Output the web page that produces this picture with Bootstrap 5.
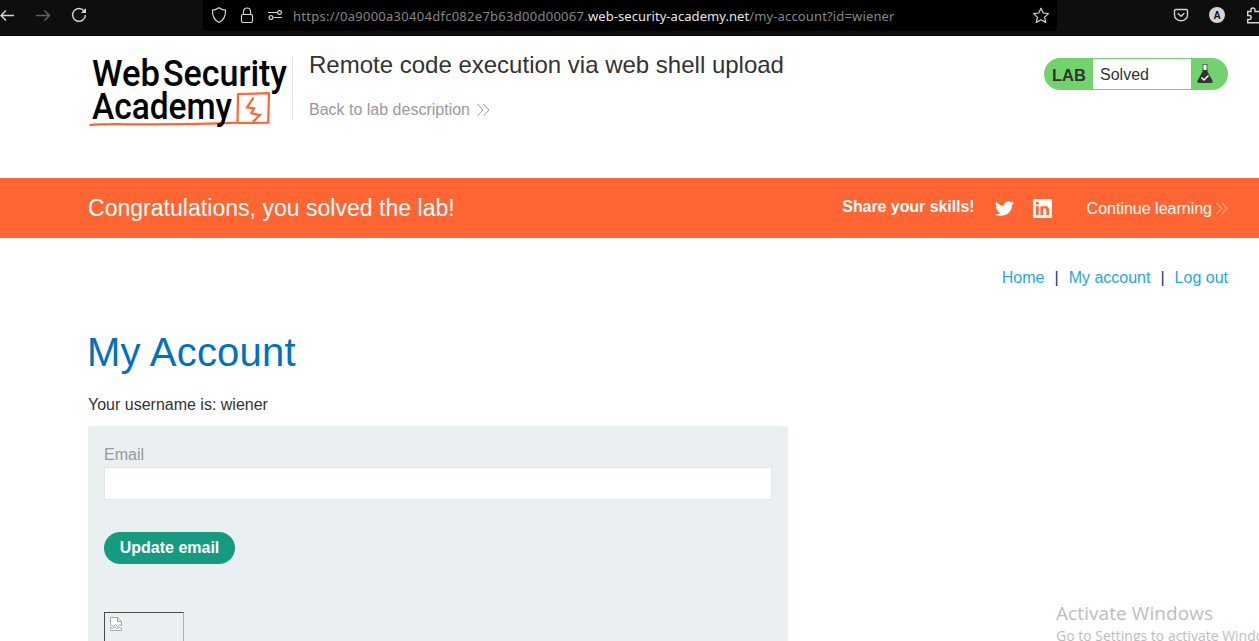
<!DOCTYPE html>
<html lang="en">
<head>
<meta charset="utf-8">
<meta name="viewport" content="width=device-width, initial-scale=1">
<title>Remote code execution via web shell upload</title>
<link href="https://cdn.jsdelivr.net/npm/bootstrap@5.3.0/dist/css/bootstrap.min.css" rel="stylesheet">
<style>
body{font-family:"Liberation Sans",Arial,sans-serif;font-size:16px;line-height:20px;color:#333332;height:641px;overflow:hidden;background:#fff}
a{text-decoration:none}
svg{display:block;flex:none}
.toolbar{height:36px;background:#0e0e0e;border-bottom:1px solid #050505;color:#d4d4d4}
.toolbar>svg{margin-top:7px}
.urlbar{margin-left:116px;width:854px;height:31px;background:#000;border-radius:0 0 4px 4px;padding:0 7px 0 8px}
.address{font-family:"Noto Sans","Open Sans",sans-serif;font-size:13px;color:#858585;white-space:nowrap;margin-left:10px;padding-top:1px;letter-spacing:.27px}
.address b{font-weight:400;color:#e6e6e6;letter-spacing:.06px}
.address .path{letter-spacing:.15px}
.profile{width:16px;height:16px;background:#d4d4d4;color:#111;font-size:10px;line-height:17px;margin-top:7px}
.inset{padding-left:88px;padding-right:31px}
.lab-header{height:142px}
.divider-line{width:1px;height:64px;background:#e4e4e4;margin:20px 16px 0 2px}
.lab-title{font-size:24px;line-height:28px;margin:15px 0 0;font-weight:400}
.back{color:#999;margin-top:21px}
.status{width:184px;height:32px;background:#72d36e;margin-top:22px}
.status strong{width:49px;padding-left:8px;font-size:16.500px;line-height:34px}
.status span{width:98px;height:30px;line-height:31px;padding-left:7px;margin-top:1px}
.banner{height:60px;background:#f63;color:#fff}
.banner h4{font-size:23px;line-height:60px;font-weight:400;letter-spacing:.03px}
.banner strong{letter-spacing:-.06px}
.menu{height:40px;margin-top:20px}
.menu a{color:#29a7df}
.menu span{color:#0b3c73;margin:0 10px}
.menu span:last-of-type{margin-right:10px}
h1.page-title{font-size:40px;line-height:48px;font-weight:400;color:#0071bc;margin:30px 0 19px -1px;letter-spacing:.2px}
.panel{width:700px;height:215px;overflow:hidden;background:#eaeff2;margin-top:11px;padding:19px 16px 0}
.panel label{color:#999;margin-bottom:2px}
.form-control{height:33px;border:1px solid #e4e6e5;border-radius:0;background:#fff}
.btn-update{width:131px;height:32px;padding:0;background:#169b80;color:#fff;font-weight:700;line-height:30px;margin-top:32px}
.avatar{width:80px;height:80px;border:1px solid #b2b2b2;border-top-color:#484a4a;border-left-color:#484a4a;margin-top:48px;padding:4px 0 0 5px}
.watermark{left:1056px;right:0;top:602px;height:39px;overflow:hidden;font-family:"Open Sans","Noto Sans",sans-serif;color:#bdbdbd;white-space:nowrap}
.watermark div:first-child{font-size:19px;line-height:22px;letter-spacing:.08px}
.watermark div:last-child{font-size:14px;line-height:22px;margin-top:1px}
</style>
</head>
<body class="position-relative">
<div class="toolbar d-flex">
  <svg width="16" height="16" viewBox="0 0 16 16" fill="none" stroke="currentColor" stroke-width="1.500"><path d="M14 8.500H1.500M6 3.500 1 8.500l5 5"/></svg>
  <svg style="margin-left:19px" width="16" height="16" viewBox="0 0 16 16" fill="none" stroke="#626262" stroke-width="1.500"><path d="M1 8.500h13M9.500 3.500l5 5-5 5"/></svg>
  <svg style="margin-left:20px" width="16" height="16" viewBox="0 0 16 16" fill="none" stroke="currentColor" stroke-width="1.500"><path d="M13.200 4.200A6.400 6.400 0 1 0 14.400 8"/><path d="M15 1v5h-5z" fill="currentColor" stroke="none"/></svg>
  <div class="urlbar d-flex">
    <svg style="margin-top:7px" width="16" height="17" viewBox="0 0 16 17" fill="none" stroke="currentColor" stroke-width="1.200"><path d="M8 .8c2 1.600 4.300 2.200 6.500 2.400.4 5.200-1.700 9.600-6.500 12.400C3.200 12.800 1.100 8.400 1.500 3.200 3.700 3 6 2.400 8 .8z"/></svg>
    <svg style="margin:7px 0 0 13px" width="14" height="17" viewBox="0 0 14 17" fill="none" stroke="currentColor" stroke-width="1.200"><rect x="1.500" y="7.500" width="11" height="8" rx="1.500"/><path d="M3.500 7V4.500a3.500 3.500 0 0 1 7 0V7"/></svg>
    <svg style="margin:8px 0 0 14px" width="15" height="14" viewBox="0 0 15 14" fill="none" stroke="currentColor" stroke-width="1.200"><circle cx="11.500" cy="4.500" r="1.900"/><circle cx="3" cy="9.500" r="1.900"/><path d="M0 4.500h9M5.500 9.500H14"/></svg>
    <div class="address d-flex align-items-center">https://0a9000a30404dfc082e7b63d00d00067.<b>web-security-academy.net</b><span class="path">/my-account?id=wiener</span></div>
    <svg class="ms-auto" style="margin-top:7px" width="18" height="17" viewBox="0 0 18 17" fill="none" stroke="currentColor" stroke-width="1.200" stroke-linejoin="round"><path d="m9 1.200 2.200 4.800 5.300.6-3.900 3.500 1.100 5.300L9 12.800l-4.700 2.600 1.100-5.300L1.500 6.600 6.800 6z"/></svg>
  </div>
  <svg style="margin-left:116px" width="16" height="16" viewBox="0 0 16 16" fill="none" stroke="currentColor" stroke-width="1.400"><path d="M2.800 2.500h10.400q1.300 0 1.300 1.300V8a6.500 5.800 0 0 1-13 0V3.800q0-1.300 1.300-1.300zM4.700 6.200 8 9.300l3.300-3.100"/></svg>
  <div class="profile rounded-circle text-center fw-bold" style="margin-left:20px">A</div>
  <svg style="margin-left:21px" width="13" height="18" viewBox="0 0 13 18" fill="none" stroke="currentColor" stroke-width="1.400"><path d="M13 4.500H9V3a2 2 0 0 0-4 0v1.500H1.700v4h1.500a2 2 0 0 1 0 4H1.700v3.300H13"/></svg>
</div>

<header class="lab-header inset d-flex">
  <svg width="202" height="94" viewBox="88 36 202 94" fill="#000">
    <g fill="none" stroke="#f63" stroke-linejoin="round"><path d="M89.500 125.200q10-1.300 40-.9 60 .6 108-1.600l.5-28.700 31-.8-.8 29.500-30.500.3" stroke-width="2.200"/><path d="m253.500 97.500-6.500 9.800 7 1-2.600 5 8.400 1.600-7 7.200" stroke-width="2.200" stroke-linejoin="miter"/></g>
    <g font-family="Roboto,Open Sans,sans-serif" font-weight="500" font-size="37.500"><text x="92" y="86.300" textLength="68" lengthAdjust="spacingAndGlyphs">Web</text><text x="163" y="86.300" textLength="124" lengthAdjust="spacingAndGlyphs">Security</text><text x="92" y="118.700" textLength="140" lengthAdjust="spacingAndGlyphs">Academy</text></g>
  </svg>
  <div class="divider-line"></div>
  <div>
    <h2 class="lab-title">Remote code execution via web shell upload</h2>
    <a href="#" class="back d-flex align-items-center">Back to lab description<svg style="margin-left:7px" width="13" height="14" viewBox="0 0 13 14" fill="none" stroke="currentColor" stroke-width="1"><path d="m.5 1 5.500 6-5.500 6M6.500 1 12 7l-5.500 6"/></svg></a>
  </div>
  <div class="status d-flex rounded-pill ms-auto"><strong>LAB</strong><span class="bg-white">Solved</span>
    <svg style="margin:6px 0 0 5px" width="18" height="20" viewBox="0 0 18 20"><path d="M6.500 5h5v2.500l5 9.300q.8 2.200-1.500 2.200H3q-2.300 0-1.500-2.200l5-9.300z" fill="#333332"/><path d="M7.200 1h3.600v5H7.200z" fill="#fff"/><path d="M6 .6h6M7 1v5M11 1v5" fill="none" stroke="#555" stroke-width=".8"/><path d="m5.500 13.500 2.500 2.500 4.500-4.500" fill="none" stroke="#fff" stroke-width="1.500"/></svg>
  </div>
</header>

<section class="banner inset d-flex">
  <h4 class="mb-0">Congratulations, you solved the lab!</h4>
  <strong class="ms-auto" style="line-height:57px">Share your skills!</strong>
  <svg style="margin:21px 0 0 20px" width="19" height="18" viewBox="0 0 16 16" preserveAspectRatio="none" fill="#fff"><path d="M5.026 15c6.038 0 9.341-5.003 9.341-9.334q.002-.211-.006-.422A6.700 6.700 0 0 0 16 3.542a6.700 6.700 0 0 1-1.889.518 3.300 3.300 0 0 0 1.447-1.817 6.500 6.500 0 0 1-2.087.793A3.286 3.286 0 0 0 7.875 6.030a9.320 9.320 0 0 1-6.767-3.429 3.290 3.290 0 0 0 1.018 4.382A3.300 3.300 0 0 1 .64 6.575v.045a3.290 3.290 0 0 0 2.632 3.218 3.200 3.200 0 0 1-.865.115 3 3 0 0 1-.614-.057 3.280 3.280 0 0 0 3.067 2.277A6.600 6.600 0 0 1 .78 13.580a6 6 0 0 1-.78-.045A9.340 9.340 0 0 0 5.026 15"/></svg>
  <svg style="margin:21px 0 0 19px" width="19" height="19" viewBox="0 0 19 19"><rect width="19" height="19" rx="1.500" fill="#fff"/><path d="M3 7.200h2.700V16H3zM3 3h2.700v2.600H3zM7.400 7.200H10v1.200c1.500-2.300 6-1.800 6 2.300V16h-2.700v-4.600c0-3-3.200-2.600-3.200-.2V16H7.400z" fill="#f63"/></svg>
  <a href="#" class="text-white d-flex align-items-center" style="margin-left:35px;padding-top:1px">Continue learning<svg style="margin-left:4px" width="12" height="13" viewBox="0 0 13 14" fill="none" stroke="currentColor" stroke-width="1"><path d="m.5 1 5.500 6-5.500 6M6.500 1 12 7l-5.500 6"/></svg></a>
</section>

<main class="inset">
  <nav class="menu d-flex justify-content-end align-items-center"><a href="#">Home</a><span>|</span><a href="#">My account</a><span>|</span><a href="#">Log out</a></nav>
  <h1 class="page-title">My Account</h1>
  <p class="mb-0">Your username is: wiener</p>
  <form class="panel">
    <label class="d-block" for="email">Email</label>
    <input class="form-control shadow-none" id="email" type="email">
    <button class="btn btn-update rounded-pill d-block" type="button">Update email</button>
    <div class="avatar"><svg width="14" height="15" viewBox="0 0 14 15" fill="#fff" stroke="#aaa"><path d="M.5 7.500v-7h7l4 4v4l-2-1-2 2-2-2-2 2zM7.500.5v4h4M.5 10l2 2 2-2 2 2 2-2 3 1.500v2H.5z"/></svg></div>
  </form>
</main>
<aside class="watermark position-absolute"><div>Activate Windows</div><div>Go to Settings to activate Windows.</div></aside>
<script src="https://cdn.jsdelivr.net/npm/bootstrap@5.3.0/dist/js/bootstrap.bundle.min.js"></script>
</body>
</html>
